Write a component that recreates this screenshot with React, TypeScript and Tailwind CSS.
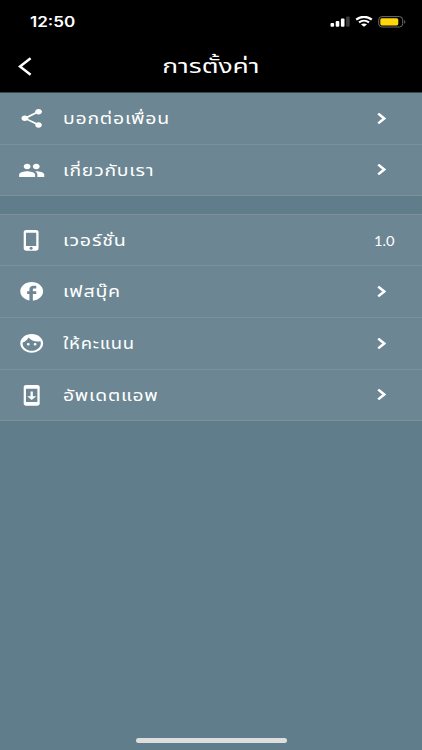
import type { ReactNode } from 'react';
import type { IconType } from 'react-icons';
import { MdFace, MdFacebook, MdPeople, MdPhoneIphone, MdShare, MdSystemUpdate } from 'react-icons/md';
import clsx from 'clsx';

// ============================================================================
// Types
// ============================================================================

interface SettingItem {
  icon: IconType;
  label: string;
  value?: string;
  /** Row height class, the bottom border included */
  height: string;
  /** Horizontal stretch of the wide label face */
  stretch: string;
}

const SHARE_ITEMS: SettingItem[] = [
  { icon: MdShare, label: 'บอกต่อเพื่อน', height: 'h-[52px]', stretch: 'scale-x-[1.295]' },
  { icon: MdPeople, label: 'เกี่ยวกับเรา', height: 'h-[51px]', stretch: 'scale-x-[1.29]' },
];

const APP_ITEMS: SettingItem[] = [
  { icon: MdPhoneIphone, label: 'เวอร์ชั่น', value: '1.0', height: 'h-[51px]', stretch: 'scale-x-[1.31]' },
  { icon: MdFacebook, label: 'เฟสบุ๊ค', height: 'h-[52px]', stretch: 'scale-x-[1.31]' },
  { icon: MdFace, label: 'ให้คะแนน', height: 'h-[52px]', stretch: 'scale-x-[1.23]' },
  { icon: MdSystemUpdate, label: 'อัพเดตแอพ', height: 'h-[51px]', stretch: 'scale-x-[1.285]' },
];

// ============================================================================
// App
// ============================================================================

export default function App() {
  return (
    <div className="flex h-[750px] w-full flex-col overflow-hidden bg-[#607d8b] font-['Noto_Sans_Thai','Noto_Sans',sans-serif] text-white">
      <header className="h-[93px] flex-none border-b border-[#37474f] bg-black">
        <StatusBar />
        <div className="grid h-[48px] grid-cols-[64px_1fr_64px] items-center">
          <svg className="-mt-px ml-[18px]" width="14" height="19" viewBox="0 0 14 19" fill="none">
            <path d="M12.6 1.2 2 9.5l10.6 8.3" stroke="#fff" strokeWidth="2.5" />
          </svg>
          <h1 className="text-center text-xl leading-none whitespace-nowrap">
            <span className="inline-block scale-x-[1.32]">การตั้งค่า</span>
          </h1>
        </div>
      </header>

      <SettingGroup items={SHARE_ITEMS} />
      <div className="h-[18px] flex-none" />
      <SettingGroup items={APP_ITEMS} className="border-t border-[#7e909a]" />

      {/* Home indicator */}
      <div className="mt-auto mb-[7.5px] h-[5px] w-[151px] self-center rounded-full bg-[#dedede]" />
    </div>
  );
}

// ============================================================================
// Status bar
// ============================================================================

function StatusBar() {
  return (
    <div className="flex h-[43px] items-center justify-between pr-[16px] pl-[30px]">
      <span className="inline-block origin-left scale-x-[1.22] font-['Inter',sans-serif] text-[14px] font-semibold">
        12:50
      </span>
      <div className="flex items-center">
        <svg width="20" height="12" viewBox="0 0 20 12" fill="#fff">
          <rect x="0.5" y="7" width="3.6" height="3.8" rx="1" />
          <rect x="5.7" y="5" width="3.6" height="5.8" rx="1" />
          <rect x="10.9" y="2.6" width="3.6" height="8.2" rx="1" />
          <rect x="16.1" y="0.4" width="3.6" height="10.4" rx="1" fill="#3b3b3b" />
        </svg>
        <svg className="ml-[5px]" width="18" height="11" viewBox="0 0 18 11" fill="none" stroke="#fff">
          <path d="M1.2 3.7C5.7-.1 12.3-.1 16.8 3.7" strokeWidth="2.2" />
          <path d="M4 6.4c2.9-2.3 7.1-2.3 10 0" strokeWidth="2" />
          <path d="M9 10.8 6 8.4c1.8-1.3 4.2-1.3 6 0Z" fill="#fff" stroke="none" />
        </svg>
        <svg className="ml-[5px]" width="28" height="12" viewBox="0 0 28 12">
          <rect x="0.7" y="0.6" width="24" height="10.4" rx="3.2" fill="none" stroke="#6b6b6b" />
          <rect x="2.3" y="2.2" width="18" height="7.2" rx="1.6" fill="#ffd60a" />
          <path d="M26.2 4v3.8c1.5-.6 1.5-3.2 0-3.8Z" fill="#6b6b6b" />
        </svg>
      </div>
    </div>
  );
}

// ============================================================================
// Setting rows
// ============================================================================

function SettingGroup({ items, className }: { items: SettingItem[]; className?: string }) {
  return (
    <ul className={clsx('flex-none bg-[#6c8793]', className)}>
      {items.map((item) => (
        <SettingRow key={item.label} item={item} />
      ))}
    </ul>
  );
}

function SettingRow({ item }: { item: SettingItem }) {
  const { icon: Icon, label, value, height, stretch } = item;
  return (
    <li className={clsx('flex items-center border-b border-[#7e909a] pl-[18px]', height)}>
      <Icon className="h-[22.6px] w-[27.4px]" preserveAspectRatio="none" />
      <span
        className={clsx(
          'mt-[2px] ml-[17.5px] inline-block origin-left text-[15px] leading-none tracking-[0.6px] whitespace-nowrap',
          stretch,
        )}
      >
        {label}
      </span>
      <Trailing>{value ? <VersionValue text={value} /> : <Chevron />}</Trailing>
    </li>
  );
}

function Trailing({ children }: { children: ReactNode }) {
  return <div className="ml-auto flex items-center">{children}</div>;
}

function VersionValue({ text }: { text: string }) {
  return (
    <span className="mt-px mr-[27px] inline-block origin-right scale-x-[1.05] font-['Lato',sans-serif] text-[14px] leading-none">
      {text}
    </span>
  );
}

function Chevron() {
  return (
    <svg className="mr-[36px]" width="9" height="12" viewBox="0 0 9 12" fill="none">
      <path d="M1.2.6 7.2 5.5l-6 4.9" stroke="#fff" strokeWidth="2.5" />
    </svg>
  );
}
